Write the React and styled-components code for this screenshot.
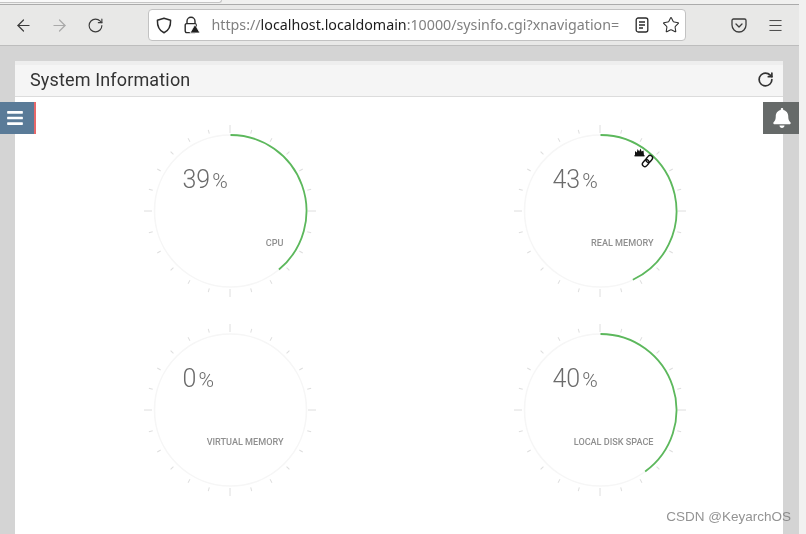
import React from 'react';
import styled, { createGlobalStyle, css } from 'styled-components';
import { ArrowLeft, ArrowRight, RotateCw, Star, Menu } from 'lucide-react';
import { FaBars, FaBell } from 'react-icons/fa';

const GlobalStyle = createGlobalStyle`
  html, body {
    margin: 0;
    padding: 0;
    height: 534px;
    overflow: hidden;
    background: #f0f0f0;
  }
`;

// own layer, so the text gets grey antialiasing like the screenshot
const greyText = css`
  transform: translateZ(0);
`;

const Screen = styled.div`
  display: flex;
  width: 806px;
  height: 534px;
  overflow: hidden;
  position: relative;
`;

const Main = styled.div`
  position: relative;
  width: 799px;
  height: 534px;
  display: flex;
  flex-direction: column;
  background: #d4d4d4;
`;

const Edge = styled.div`
  flex: 1;
  background: #f1f1f0;
`;

const TabStrip = styled.div`
  height: 4px;
  background: #f0f0ef;
  border-bottom: 1px solid #ababab;
  box-sizing: content-box;
`;

const Tab = styled.div`
  width: 221px;
  height: 2px;
  background: #f9f9f9;
  border-bottom: 1px solid #c4c4c4;
  border-right: 1px solid #c4c4c4;
  border-bottom-right-radius: 3px;
`;

const Toolbar = styled.div`
  height: 40px;
  display: flex;
  align-items: center;
  padding-left: 5px;
  background: #e8e8e7;
  border-bottom: 1px solid #bdbdbd;
  box-sizing: content-box;
`;

const ToolButton = styled.div`
  width: 36px;
  height: 36px;
  display: flex;
  align-items: center;
  justify-content: center;
  color: ${({ $dim }) => ($dim ? '#a9a9a9' : '#3b3b3b')};
`;

const AddressBar = styled.div`
  width: 538px;
  height: 32px;
  margin: 0 35px;
  padding-left: 7px;
  box-sizing: border-box;
  display: flex;
  align-items: center;
  background: #fff;
  border: 1px solid #c2c2c2;
  border-radius: 4px;
  color: #2e2e2e;
`;

const AddressIcon = styled.span`
  width: ${({ $w }) => $w || 16}px;
  height: 18px;
  margin-left: ${({ $gap }) => $gap || 0}px;
  display: flex;
  align-items: center;
  justify-content: center;
  flex: none;
`;

const Url = styled.div`
  width: 420px;
  margin-left: 11.5px;
  margin-right: 0.5px;
  margin-top: -1px;
  white-space: nowrap;
  font: 14.25px "Noto Sans", sans-serif;
  color: #808080;
  ${greyText}
  b {
    font-weight: 400;
    color: #1c1c1c;
  }
`;

const Content = styled.div`
  flex: 1;
  padding: 15px 16px 0 15px;
  display: flex;
  min-height: 0;
  min-width: 0;
`;

const Panel = styled.section`
  flex: 1;
  min-width: 0;
  display: flex;
  flex-direction: column;
  border-top: 4px solid #eeeeee;
  background: #fff;
`;

const PanelHeader = styled.header`
  height: 32px;
  padding: 0 9px 2px 15px;
  display: flex;
  align-items: center;
  justify-content: space-between;
  background: #f5f5f5;
  border-bottom: 1px solid #dcdcdc;
  box-sizing: border-box;
`;

const Title = styled.h1`
  margin: 0;
  font: 400 18px Roboto, sans-serif;
  letter-spacing: 0.15px;
  color: #333;
  ${greyText}
`;

const GaugeGrid = styled.div`
  display: grid;
  grid-template-columns: 370px 370px;
  grid-auto-rows: 180px;
  row-gap: 19px;
  padding: 24px 0 0 30px;
  justify-items: center;
`;

const GaugeBox = styled.div`
  position: relative;
  width: 180px;
  height: 180px;
`;

const GaugeValue = styled.div`
  position: absolute;
  left: 42.5px;
  top: 45px;
  display: flex;
  align-items: baseline;
  gap: 2px;
  font: 300 25px Roboto, sans-serif;
  line-height: 28px;
  color: #6b6b6b;
  ${greyText}
  span {
    font-size: 21px;
  }
`;

const GaugeLabel = styled.div`
  position: absolute;
  right: 36.5px;
  top: 116px;
  font: 500 9.1px Roboto, sans-serif;
  line-height: 12px;
  white-space: nowrap;
  color: #8f8f8f;
  ${greyText}
`;

const SideTab = styled.div`
  position: absolute;
  top: 102px;
  height: 32px;
  display: flex;
  align-items: center;
  justify-content: center;
  color: #fff;
`;

const MenuTab = styled(SideTab)`
  left: 0;
  width: 36px;
  padding-right: 4px;
  box-sizing: border-box;
  background: #5a7b98;
  border-right: 2px solid #e8686a;
`;

const BellTab = styled(SideTab)`
  right: 0;
  width: 36px;
  padding-left: 1px;
  box-sizing: border-box;
  background: #666a69;
`;

const Cursor = styled.svg`
  position: absolute;
  left: 633px;
  top: 146px;
`;

const Watermark = styled.div`
  position: absolute;
  right: 15px;
  top: 509px;
  font: 13.5px "Liberation Sans", sans-serif;
  white-space: nowrap;
  color: rgba(120, 120, 120, 0.8);
  ${greyText}
`;

const gauges = [
  { label: 'CPU', value: 39 },
  { label: 'REAL MEMORY', value: 43 },
  { label: 'VIRTUAL MEMORY', value: 0 },
  { label: 'LOCAL DISK SPACE', value: 40 },
];

const ticks = Array.from({ length: 24 }, (_, i) => i * 15);

const arcPath = (value) => {
  const a = (value / 100) * 2 * Math.PI;
  const x = 90.5 + 76 * Math.sin(a);
  const y = 90 - 76 * Math.cos(a);
  return `M90.5 14 A76 76 0 ${value > 50 ? 1 : 0} 1 ${x.toFixed(2)} ${y.toFixed(2)}`;
};

const Gauge = ({ label, value }) => (
  <GaugeBox>
    <svg width="180" height="180" viewBox="0 0 180 180">
      <circle cx="90.5" cy="90" r="76" fill="none" stroke="#f6f6f6" strokeWidth="1.6" />
      {ticks.map((deg) => (
        <line
          key={deg}
          x1="90"
          x2="90"
          y1={deg % 90 === 0 ? 4 : 6}
          y2={deg % 90 === 0 ? 12 : 10}
          stroke="#dedede"
          strokeWidth="1"
          transform={`rotate(${deg} 90 90)`}
        />
      ))}
      {value > 0 && <path d={arcPath(value)} fill="none" stroke="#5cb85c" strokeWidth="1.8" />}
    </svg>
    <GaugeValue>
      {value}
      <span>%</span>
    </GaugeValue>
    <GaugeLabel>{label}</GaugeLabel>
  </GaugeBox>
);

export default function App() {
  return (
    <Screen>
      <GlobalStyle />
      <Main>
        <TabStrip>
          <Tab />
        </TabStrip>
        <Toolbar>
          <ToolButton>
            <ArrowLeft size={19} strokeWidth={1.5} />
          </ToolButton>
          <ToolButton $dim>
            <ArrowRight size={19} strokeWidth={1.5} />
          </ToolButton>
          <ToolButton>
            <RotateCw size={17} strokeWidth={1.6} />
          </ToolButton>
          <AddressBar>
            <AddressIcon>
              <svg width="16" height="17" viewBox="0 0 16 17" fill="none" stroke="#2b2b2b" strokeWidth="1.5">
                <path d="M8 1.2 L14.6 3.2 C14.8 9 13 13.4 8 15.8 C3 13.4 1.2 9 1.4 3.2 Z" strokeLinejoin="round" />
              </svg>
            </AddressIcon>
            <AddressIcon $gap={12}>
              <svg width="16" height="18" viewBox="0 0 16 18">
                <path d="M3 8 V5.2 a4 4 0 0 1 8 0 V8" fill="none" stroke="#2b2b2b" strokeWidth="1.4" />
                <rect x="1.2" y="7.6" width="11" height="9" rx="1.5" fill="none" stroke="#2b2b2b" strokeWidth="1.4" />
                <path d="M11 8.5 L16 17 H6 Z" fill="#1f1f1f" stroke="#fff" strokeWidth="0.8" />
              </svg>
            </AddressIcon>
            <Url>
              https://<b>localhost.localdomain</b>:10000/sysinfo.cgi?xnavigation=
            </Url>
            <AddressIcon $gap={2}>
              <svg width="14" height="16" viewBox="0 0 14 16" fill="none" stroke="#2b2b2b" strokeWidth="1.3">
                <rect x="1.2" y="1" width="11.6" height="14" rx="2" />
                <path d="M4 5 H10 M4 8 H10 M4 11 H8" />
              </svg>
            </AddressIcon>
            <AddressIcon $gap={12} $w={18}>
              <Star size={18} strokeWidth={1.4} />
            </AddressIcon>
          </AddressBar>
          <ToolButton>
            <svg width="16" height="15" viewBox="0 0 16 15" fill="none" stroke="#3b3b3b" strokeWidth="1.3">
              <path d="M2.5 1 H13.5 A1.5 1.5 0 0 1 15 2.5 V7 A7 7 0 0 1 1 7 V2.5 A1.5 1.5 0 0 1 2.5 1 Z" />
              <path d="M5 6 L8 9 L11 6" strokeLinecap="round" strokeLinejoin="round" />
            </svg>
          </ToolButton>
          <ToolButton>
            <Menu size={17} strokeWidth={1.3} />
          </ToolButton>
        </Toolbar>
        <Content>
          <Panel>
            <PanelHeader>
              <Title>System Information</Title>
              <RotateCw size={17} strokeWidth={2.4} color="#333" />
            </PanelHeader>
            <GaugeGrid>
              {gauges.map((g) => (
                <Gauge key={g.label} label={g.label} value={g.value} />
              ))}
            </GaugeGrid>
          </Panel>
        </Content>
        <MenuTab>
          <FaBars size={18} />
        </MenuTab>
        <BellTab>
          <FaBell size={20} />
        </BellTab>
        <Cursor width="22" height="22" viewBox="0 0 22 22">
          <path d="M2 9.5 L2 5 L3.8 6.5 L4.6 3 L6.2 5.5 L7.5 2.5 L8.6 5.5 L10.5 4.5 L11 9.5 Z" fill="#111" />
          <rect x="1.5" y="9" width="10" height="1.4" fill="#111" />
          <g fill="none" stroke="#111" strokeWidth="1.4" transform="rotate(-50 14.5 15)">
            <rect x="8" y="12.5" width="7.5" height="5" rx="2.5" />
            <rect x="13.5" y="12.5" width="7.5" height="5" rx="2.5" />
          </g>
        </Cursor>
      </Main>
      <Edge />
      <Watermark>CSDN @KeyarchOS</Watermark>
    </Screen>
  );
}
